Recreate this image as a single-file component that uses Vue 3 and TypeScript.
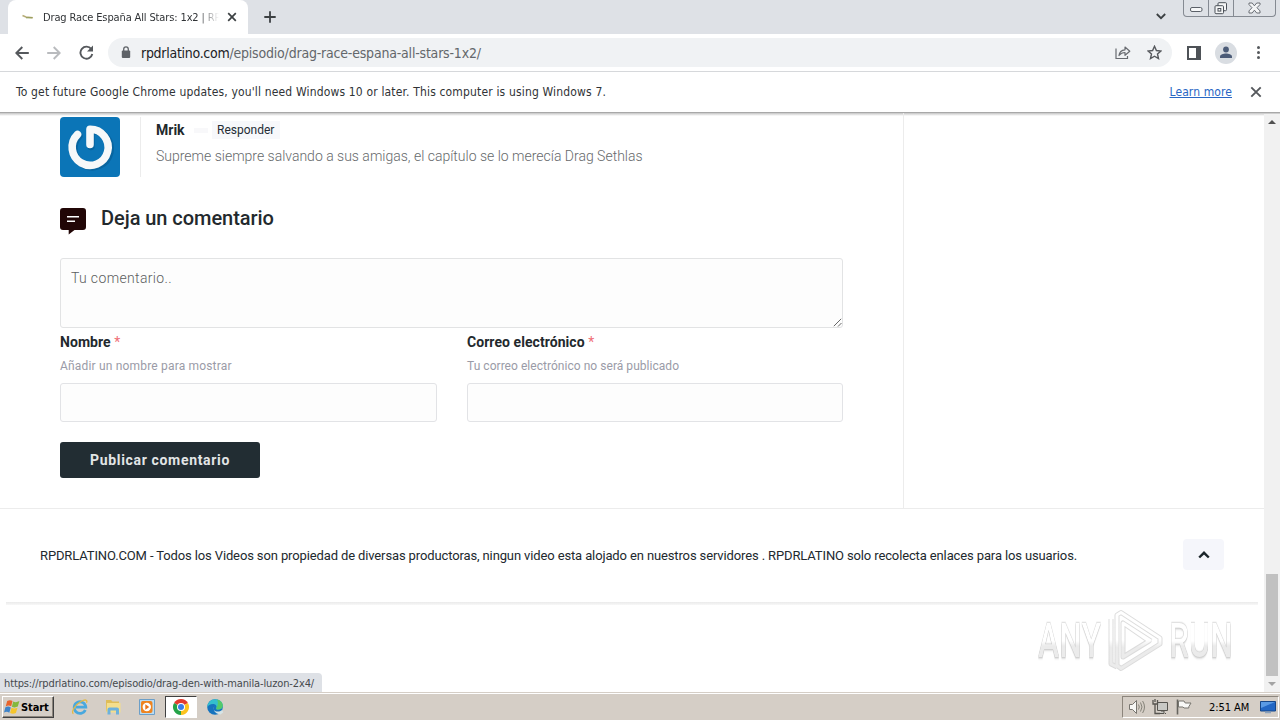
<script setup lang="ts">
interface Field {
  label: string
  hint: string
  kind: string
}

const fields: Field[] = [
  { label: 'Nombre', hint: 'Añadir un nombre para mostrar', kind: 'name' },
  { label: 'Correo electrónico', hint: 'Tu correo electrónico no será publicado', kind: 'mail' },
]
</script>

<template>
  <div class="desktop">
    <header class="tabs">
      <div class="tab">
        <svg class="favicon" width="12" height="6" viewBox="0 0 12 6"><path d="M.5 1.5 4 3l7 .8" fill="none" stroke="#b7ad78" stroke-width="1.6" /><path d="M4 3.8h6" stroke="#8e9a56" /></svg>
        <span class="tab-title">Drag Race España All Stars: 1x2 | RP</span>
        <svg class="tab-close" width="10" height="10" viewBox="0 0 10 10"><path d="m1.2 1.2 7.6 7.6m0-7.6L1.2 8.8" stroke="#3c4043" stroke-width="1.7" /></svg>
      </div>
      <svg class="new-tab" width="12" height="12" viewBox="0 0 12 12"><path d="M6 .3v11.4M.3 6h11.4" stroke="#3c4043" stroke-width="1.8" /></svg>
      <svg class="tab-search" width="10" height="7" viewBox="0 0 10 7"><path d="m.8 1 4.2 4.2L9.2 1" fill="none" stroke="#3c4043" stroke-width="1.8" /></svg>
      <div class="window-buttons">
        <span class="wb min"><svg width="13" height="6" viewBox="0 0 13 6"><rect x=".5" y=".5" width="11.5" height="4" rx="1.5" fill="#f6f7f8" stroke="#5b6068" /></svg></span>
        <span class="wb max"><svg width="14" height="13" viewBox="0 0 14 13"><rect x="4" y=".7" width="8.5" height="8" rx="1" fill="#f4f5f6" stroke="#4b5058" /><rect x="1" y="3.7" width="8.5" height="8" rx="1" fill="#f4f5f6" stroke="#4b5058" /><rect x="4" y="6.5" width="2.8" height="2.6" fill="none" stroke="#4b5058" /></svg></span>
        <span class="wb shut"><svg width="13" height="12" viewBox="0 0 13 12"><path d="M1 1h3.200l2.200 2.800L8.700 1H12v1.600L9 5.700l3 3.200V11H8.700L6.400 8.200 4.200 11H1V8.900l3-3.200-3-3.100z" fill="#f4f5f6" stroke="#5b6068" stroke-width=".9" /></svg></span>
      </div>
    </header>

    <div class="toolbar">
      <svg class="back" width="14" height="14" viewBox="0 0 14 14"><path d="M13.800 7H1.500M7.300 1 1.300 7l6 6" fill="none" stroke="#55585c" stroke-width="1.900" /></svg>
      <svg class="forward" width="14" height="14" viewBox="0 0 14 14"><path d="M.2 7h12.300M6.700 1l6 6-6 6" fill="none" stroke="#b9bbbe" stroke-width="1.900" /></svg>
      <svg class="reload" width="15" height="15" viewBox="0 0 15 15"><path d="M12.300 4.100A6 6 0 1 0 13.300 9" fill="none" stroke="#55585c" stroke-width="1.900" /><path d="M14 .6v6H8z" fill="#55585c" /></svg>
      <div class="address">
        <svg class="lock" width="10" height="13" viewBox="0 0 10 13"><rect x=".8" y="4.500" width="8.400" height="7.500" rx="1" fill="#5f6368" /><path d="M2.700 5V3.200a2.300 2.300 0 0 1 4.600 0V5" fill="none" stroke="#5f6368" stroke-width="1.300" /></svg>
        <span class="url"><span class="host">rpdrlatino.com</span><span class="path">/episodio/drag-race-espana-all-stars-1x2/</span></span>
        <svg class="share" width="16" height="15" viewBox="0 0 16 15"><path d="M1 3.500V13.500h11.500V11" fill="none" stroke="#686b70" stroke-width="1.200" /><path d="M4 10.500c.4-3.600 2.600-5.500 6-5.700V2l4.800 4.200L10 10.300V7.500C7.300 7.500 5.500 8.500 4 10.500z" fill="none" stroke="#686b70" stroke-width="1.200" stroke-linejoin="round" /></svg>
        <svg class="star" width="15" height="15" viewBox="0 0 15 15"><path d="m7.500 1.300 1.900 4.200 4.500.5-3.400 3 1 4.500-4-2.300-4 2.300 1-4.500-3.400-3 4.500-.5z" fill="none" stroke="#55585c" stroke-width="1.400" /></svg>
      </div>
      <svg class="side" width="14" height="14" viewBox="0 0 14 14"><path d="M0 0h14v14H0zM2 2v10h7V2z" fill="#4e5257" fill-rule="evenodd" /></svg>
      <div class="profile"><svg width="14" height="13" viewBox="0 0 14 13"><circle cx="7" cy="3.500" r="2.900" fill="#4c5c78" /><path d="M1 12V10.500C1 8.500 4.500 7.500 7 7.500s6 1 6 3V12z" fill="#4c5c78" /></svg></div>
      <div class="menu"><i></i><i></i><i></i></div>
    </div>

    <div class="infobar">
      <span class="info-text">To get future Google Chrome updates, you'll need Windows 10 or later. This computer is using Windows 7.</span>
      <a class="learn">Learn more</a>
      <svg class="info-close" width="12" height="12" viewBox="0 0 12 12"><path d="m1.300 1.300 9.400 9.400m0-9.400-9.400 9.400" stroke="#55585c" stroke-width="1.900" /></svg>
    </div>

    <div class="viewport">
      <main class="page">
        <div class="columns">
          <section class="comments">
            <article class="comment">
              <div class="avatar">
                <svg width="60" height="60" viewBox="0 0 60 60">
                  <path d="M18 17.500A18.200 18.200 0 1 0 30 12v16" transform="translate(1 1.500)" fill="none" stroke="#0865a0" stroke-width="7.500" stroke-linecap="round" stroke-linejoin="round" />
                  <path d="M17.500 17.500A18 18 0 1 0 30 12.300V27.500" fill="none" stroke="#f6f8f9" stroke-width="7.600" stroke-linecap="round" stroke-linejoin="round" />
                </svg>
              </div>
              <div class="comment-body">
                <div class="meta"><b>Mrik</b><i class="date"></i><span class="reply">Responder</span></div>
                <p>Supreme siempre salvando a sus amigas, el capítulo se lo merecía Drag Sethlas</p>
              </div>
            </article>

            <h3 class="heading">
              <svg width="26" height="27" viewBox="0 0 26 27"><path d="M3 0h20a3 3 0 0 1 3 3v16a3 3 0 0 1-3 3H14.500L8.700 26.500V22H3a3 3 0 0 1-3-3V3a3 3 0 0 1 3-3z" fill="#210606" /><path d="M7 8.700h12M7 13.300h8" stroke="#fff" stroke-width="1.500" /></svg>
              <span>Deja un comentario</span>
            </h3>

            <div class="textarea">
              <span>Tu comentario..</span>
              <svg class="grip" width="9" height="9" viewBox="0 0 9 9"><path d="M.8 8.200 8.200.8M5 8.500 8.500 5" stroke="#666" stroke-width="1" /></svg>
            </div>
            <div class="fields">
              <div v-for="f in fields" :key="f.kind" class="field" :class="f.kind">
                <label><span class="label-text">{{ f.label }}</span> <em>*</em></label>
                <small>{{ f.hint }}</small>
                <div class="input"></div>
              </div>
            </div>
            <div class="submit"><span>Publicar comentario</span></div>
          </section>
          <aside></aside>
        </div>
        <footer class="footer">
          <span class="legal">RPDRLATINO.COM - Todos los Videos son propiedad de diversas productoras, ningun video esta alojado en nuestros servidores . RPDRLATINO solo recolecta enlaces para los usuarios.</span>
          <div class="top"><svg width="12" height="8" viewBox="0 0 12 8"><path d="m1.200 6.500 4.800-4.700 4.800 4.700" fill="none" stroke="#1c262b" stroke-width="2.400" /></svg></div>
        </footer>
        <div class="footer-shadow"></div>
      </main>
      <div class="scrollbar">
        <svg width="8" height="4" viewBox="0 0 8 4"><path d="m0 4 4-4 4 4z" fill="#505050" /></svg>
        <div class="thumb"></div>
        <svg class="down" width="8" height="4" viewBox="0 0 8 4"><path d="m0 0 4 4 4-4z" fill="#a3a3a3" /></svg>
      </div>
      <div class="status"><span>https://rpdrlatino.com/episodio/drag-den-with-manila-luzon-2x4/</span></div>
      <div class="watermark">
        <span class="any">ANY</span>
        <svg width="60" height="64" viewBox="0 0 60 64">
          <defs><linearGradient id="mark" gradientUnits="userSpaceOnUse" x1="0" y1="0" x2="0" y2="62"><stop offset=".5" stop-color="#fff" /><stop offset=".62" stop-color="#ebebeb" /></linearGradient></defs>
          <g fill="none" stroke-linejoin="round">
            <path d="M17 3.500 56 29v6L17 59.500l-4-3V6zM19 14v34l26-16zM7 10v45l6 3M19 14l28 18" stroke="#dcdcdc" stroke-width="5" />
            <path d="M17 3.500 56 29v6L17 59.500l-4-3V6zM19 14v34l26-16zM7 10v45l6 3M19 14l28 18" stroke="url(#mark)" stroke-width="3" />
          </g>
        </svg>
        <span class="run">RUN</span>
      </div>
    </div>

    <div class="taskbar">
      <div class="start">
        <svg width="16" height="16" viewBox="0 0 16 16"><path d="M3.200 2C5.500.600 7.200 1.200 8.500 2L7.200 7.300c-1.900-1-3.500-1-5.500.2z" fill="#e8642c" /><path d="M9.200 2.500c2 1 3.800.8 6.200-.500l-1.600 5.600c-2.200 1.100-4 1-5.900.2z" fill="#84b83c" /><path d="M1.400 8.300c2-1 3.600-.9 5.400.1l-1.500 5.300c-1.800-1.100-3.400-1.100-5.300-.1z" fill="#3f84c9" /><path d="M7.500 8.800c2 .8 3.800.8 6-.1l-1.600 5.300c-2.200 1.100-3.900 1-5.800 0z" fill="#f5c52c" /></svg>
        <b>Start</b>
      </div>
      <div class="task ie"><svg width="18" height="18" viewBox="0 0 18 18"><path d="M14.300 12A5.800 5.800 0 1 1 14.800 9.200H5" fill="none" stroke="#48a8de" stroke-width="2.800" /><path d="M2.400 15.700C-.5 14 4.500 6.500 10 3.500c4-2.300 7-2 5.500 1.200" fill="none" stroke="#e3b944" stroke-width="1.300" /></svg></div>
      <div class="task explorer"><svg width="18" height="18" viewBox="0 0 18 18"><path d="M2 2h5l1.500 1.500H15v10H2z" fill="#dfbd58" /><path d="M3 5h13.500v9.500H2.500z" fill="#f4de8c" /><path d="M3.500 16.500v-5q0-2 2-2h7.500q2 0 2 2v5h-3v-4H6.500v4z" fill="#6db1dc" /></svg></div>
      <div class="task media"><svg width="18" height="18" viewBox="0 0 18 18"><path d="M1.500 1.500h15v15h-15z" fill="#b9dcf3" stroke="#6c9fc8" /><path d="M4.500 3h8q2 0 2 2v8q0 2-2 2h-8q-1.500 0-1.500-2V5q0-2 1.500-2z" fill="#ee8420" /><circle cx="8.800" cy="9" r="4.200" fill="#fff" /><path d="m7.300 6.300 4 2.700-4 2.700z" fill="#e8741a" /></svg></div>
      <div class="task chrome"><svg width="18" height="18" viewBox="0 0 18 18"><path d="M9 9 2.070 5A8 8 0 0 1 15.930 5z" fill="#e33b2e" /><path d="M9 9 15.930 5A8 8 0 0 1 9 17z" fill="#fcc31e" /><path d="M9 9v8A8 8 0 0 1 2.070 5z" fill="#25a348" /><circle cx="9" cy="9" r="4" fill="#fff" /><circle cx="9" cy="9" r="3" fill="#397de8" /></svg></div>
      <div class="task edge"><svg width="18" height="18" viewBox="0 0 18 18"><circle cx="9" cy="9" r="7.800" fill="#1673be" /><path d="M1.200 9.500C1.400 4.500 5 1.200 9.200 1.200c4.600 0 7.600 3 7.600 6.300 0 2.600-2 4-4.500 4-1.700 0-2.600-.7-2-1.600C11 8.500 10 6 7 6 4.200 6 2 7.500 1.200 9.500z" fill="#34bfce" /><path d="M11 1.500c4 1 5.800 3.500 5.800 6 0 2.600-2 4-4.500 4-1.700 0-2.600-.7-2-1.600 1.300-1.800 2.500-5 .7-8.400z" fill="#55c96a" /><path d="M8.200 8.500c-2 3 .8 6 5.800 4.800l2.200-1.200 1 2.400-2.700 2C9 15.700 6.500 12 8.200 8.500z" fill="#d6e4e6" /></svg></div>
      <div class="tray">
        <svg class="volume" width="18" height="16" viewBox="0 0 18 16"><path d="M1.500 5.500h3L8.500 1.500v13l-4-4h-3z" fill="#f7f7f5" stroke="#77756f" /><path d="M10.500 5.500q1.600 2.500 0 5M12.500 3.500q3 4.500 0 9M14.600 2q3.800 6 0 12" fill="none" stroke="#858379" /></svg>
        <svg class="network" width="16" height="16" viewBox="0 0 16 16"><path d="M5.500 3.500h10v8h-10zM9 12h3v2.500H7M13 14.500h1" fill="#c9c9c5" stroke="#56544f" /><path d="M1 1v4h4.500V1M3 0v3M3 5v9.500h5" fill="none" stroke="#56544f" stroke-width="1.300" /></svg>
        <svg class="flag" width="16" height="16" viewBox="0 0 16 16"><path d="M1.500.5v15" stroke="#66645e" stroke-width="1.600" /><path d="M2.500 2h5.500l1.200 2H15l-2.200 3.700 0 1.300H8L7 8H2.500z" fill="#f8f8f6" stroke="#77756f" /></svg>
        <span class="clock">2:51 AM</span>
        <svg class="show" width="16" height="14" viewBox="0 0 16 14"><path d="M.5 1.500h15v9.500H.5z" fill="#2367c4" stroke="#174788" /><path d="M1 2h14L1 8z" fill="#5a9ae4" /><path d="M5 12.500h6" stroke="#8aa1bd" stroke-width="1.500" /></svg>
      </div>
    </div>
  </div>
</template>

<style>
body { margin: 0; overflow: hidden; }
</style>

<style scoped>
* { box-sizing: border-box; }
svg { display: block; flex: none; }
.desktop { width: 1280px; height: 720px; display: flex; flex-direction: column; background: #fff; overflow: hidden; font-family: "DejaVu Sans Condensed", "DejaVu Sans", sans-serif; font-stretch: condensed; white-space: nowrap; color: #303336; }

.tabs { height: 34px; flex: none; background: #dee1e6; display: flex; align-items: flex-start; }
.tab { width: 240px; height: 34px; margin-left: 8px; background: #fff; border-radius: 8px 8px 0 0; display: flex; align-items: center; padding: 0 11px 0 14px; }
.tab-title { margin-left: 9px; width: 176px; font-size: 11px; letter-spacing: -.13px; -webkit-mask-image: linear-gradient(90deg, #000 88%, transparent); mask-image: linear-gradient(90deg, #000 88%, transparent); }
.tab-close { margin-left: auto; }
.new-tab { margin: 11px 0 0 16px; }
.tab-search { margin: 13px 17px 0 auto; }
.window-buttons { display: flex; width: 93px; height: 17px; margin-right: 4px; border: 1px solid #858a92; border-top: 0; border-radius: 0 0 4px 4px; }
.wb { display: flex; align-items: center; justify-content: center; height: 16px; }
.min { width: 25px; border-right: 1px solid #858a92; padding-top: 4px; }
.max { width: 25px; border-right: 1px solid #858a92; }
.shut { width: 41px; }

.toolbar { height: 38px; flex: none; display: flex; align-items: center; background: #fff; border-bottom: 1px solid #d6d8db; }
.back { margin-left: 15px; }
.forward { margin-left: 18px; }
.reload { margin-left: 18px; }
.address { margin-left: 14px; width: 1064px; height: 29px; border-radius: 15px; background: #f0f2f4; display: flex; align-items: center; }
.lock { margin-left: 13px; }
.url { margin-left: 10px; font-size: 14px; }
.host { color: #202124; letter-spacing: -.28px; }
.path { color: #63676b; letter-spacing: -.2px; }
.share { margin-left: auto; }
.star { margin: 0 10px 0 16px; }
.side { margin-left: 15px; }
.profile { width: 22px; height: 22px; margin-left: 14px; border-radius: 50%; background: #d9dde2; display: flex; align-items: center; justify-content: center; }
.menu { margin-left: 20px; display: flex; flex-direction: column; gap: 2px; }
.menu i { width: 3px; height: 3px; border-radius: 50%; background: #55585c; }

.infobar { height: 41px; flex: none; display: flex; align-items: center; background: #fff; padding: 0 18px 1px 16px; border-bottom: 1px solid #a8a8a8; font-size: 12px; }
.info-text { letter-spacing: .16px; }
.learn { margin-left: auto; color: #2866c4; text-decoration: underline; letter-spacing: .1px; }
.info-close { margin-left: 18px; }

.viewport { position: relative; height: 579px; flex: none; display: flex; background: linear-gradient(#c4c4c4, #fff 3px); }
.page { width: 1264px; font-family: Roboto, sans-serif; font-stretch: normal; }
.columns { height: 396px; display: flex; border-bottom: 1px solid #ececec; }
.comments { width: 904px; padding: 4px 60px 0; border-right: 1px solid #ececec; }
.comment { display: flex; height: 60px; }
.avatar { width: 60px; height: 60px; border-radius: 4px; background: #0b75b7; overflow: hidden; }
.comment-body { margin-left: 20px; padding-left: 15px; border-left: 1px solid #ececec; }
.meta { display: flex; align-items: center; height: 18px; margin-top: 4px; }
.meta b { font-size: 14px; font-weight: 700; color: #22292c; width: 36px; }
.date { width: 14px; height: 5px; background: #f8f8fa; margin-left: 2px; }
.reply { margin-left: 4px; height: 18px; padding: 0 6px 0 5px; background: #f7f8fb; font-size: 12px; line-height: 18px; color: #252d35; }
.comment p { margin: 8px 0 0; font-size: 14px; line-height: 18px; font-weight: 300; color: #66696b; }
.heading { margin: 31px 0 0; height: 26px; display: flex; align-items: flex-start; gap: 15px; font-size: 20px; font-weight: 500; line-height: 20px; letter-spacing: -.05px; color: #23292d; }
.textarea { position: relative; height: 70px; margin-top: 24px; border: 1px solid #e2e3e4; border-radius: 3px; background: #fdfdfd; padding: 10px; font-size: 14px; line-height: 18px; font-weight: 300; letter-spacing: .35px; color: #5c5e60; }
.grip { position: absolute; right: 0; bottom: 0; }
.fields { display: flex; gap: 30px; }
.field { width: 377px; }
.field.mail { width: 376px; }
.field label { display: block; height: 28px; line-height: 28px; font-size: 14px; font-weight: 700; color: #23292d; }
.label-text { letter-spacing: .06px; }
.field em { font-style: normal; font-weight: 400; color: #ef7078; }
.field small { display: block; height: 20px; line-height: 20px; font-size: 12px; color: #9a9ba7; }
.name small { letter-spacing: .18px; }
.mail small { letter-spacing: .04px; }
.input { height: 39px; margin-top: 7px; border: 1px solid #e2e3e6; border-radius: 3px; background: #fdfdfd; }
.submit { width: 200px; height: 36px; margin-top: 20px; border-radius: 3px; background: #222d33; color: #e2e5e6; font-size: 14px; font-weight: 700; line-height: 36px; text-align: center; letter-spacing: .67px; }
.footer { height: 93px; display: flex; align-items: center; padding: 0 40px; color: #22292e; font-size: 13px; letter-spacing: -.125px; }
.top { width: 41px; height: 31px; margin: 0 0 2px auto; border-radius: 4px; background: #f5f6fb; display: flex; align-items: center; justify-content: center; }
.footer-shadow { width: 1252px; height: 3px; margin-left: 6px; background: linear-gradient(#eaeaea, #f8f8f8); }
.scrollbar { width: 16px; margin-top: 1px; display: flex; flex-direction: column; align-items: center; background: #f1f1f1; padding-top: 6px; }
.thumb { width: 12px; height: 102px; margin-top: 450px; background: #c1c1c1; }
.down { margin-top: 6px; }
.status { position: absolute; left: 0; bottom: 0; width: 322px; height: 19px; padding-left: 4px; background: #dee1e6; border-top-right-radius: 4px; font-size: 11px; line-height: 21px; letter-spacing: -.13px; color: #45494d; }
.watermark { position: absolute; left: 1038px; top: 496px; display: flex; align-items: center; font-family: Roboto, sans-serif; font-stretch: normal; font-size: 48px; font-weight: 500; line-height: 50px; }
.watermark span { display: block; transform-origin: 0 50%; transform: scaleX(.665); color: transparent; background: linear-gradient(#fff 50%, #ebebeb 60%); background-clip: text; -webkit-background-clip: text; filter: drop-shadow(0 0 1px #b8b8b8) drop-shadow(0 1px 1px #d4d4d4); }
.any { width: 98px; margin-right: -32px; }
.run { width: 98px; margin-left: 5px; }

.taskbar { height: 28px; flex: none; display: flex; align-items: center; background: #d5cec6; border-top: 1px solid #d5cec6; box-shadow: inset 0 1px #fff; padding-top: 1px; font-size: 11px; color: #000; }
.start { width: 52px; height: 22px; margin: 0 0 0 2px; display: flex; align-items: center; gap: 1px; padding-left: 1px; border: 1px solid; border-color: #fff #404040 #404040 #fff; box-shadow: inset -1px -1px #8c857c; }
.start b { font-size: 11px; letter-spacing: -.1px; }
.task { display: flex; align-items: center; justify-content: center; height: 22px; }
.ie { margin-left: 17px; }
.explorer { margin-left: 15px; }
.media { margin-left: 16px; }
.chrome { width: 32px; margin-left: 9px; background: #fff; border: 1px solid; border-color: #404040 #fff #fff #404040; }
.edge { margin-left: 9px; }
.tray { width: 157px; height: 22px; margin: 0 1px 0 auto; display: flex; align-items: center; border: 1px solid; border-color: #8c857c #fff #fff #8c857c; padding-left: 5px; }
.network { margin-left: 6px; }
.flag { margin-left: 8px; }
.clock { margin-left: 17px; width: 43px; letter-spacing: -.05px; }
.show { margin-left: 8px; }
</style>
